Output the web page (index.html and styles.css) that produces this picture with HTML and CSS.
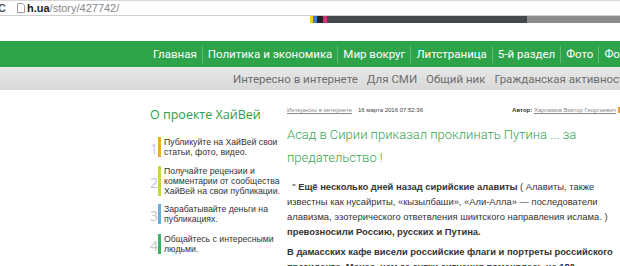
FILE: index.html
```html
<!DOCTYPE html>
<html lang="ru">
<head>
  <meta charset="UTF-8">
  <title>Асад в Сирии приказал проклинать Путина</title>
  <link rel="stylesheet" href="styles.css">
</head>
<body>
  <div class="urlbar">
    <span class="reload">C</span>
    <svg class="pageicon" width="8" height="10" viewBox="0 0 8 10"><path d="M0.5 0.5h5l2 2v7h-7z" fill="#fff" stroke="#999"/></svg>
    <span class="host">h.ua</span><span class="path">/story/427742/</span>
  </div>

  <div class="strip">
    <span class="c1"></span><span class="c2"></span><span class="c3"></span><span class="c4"></span>
    <span class="dark"></span><span class="light"></span>
  </div>

  <nav class="mainnav">
    <a href="#">Главная</a>
    <a href="#">Политика и экономика</a>
    <a href="#">Мир вокруг</a>
    <a href="#">Литстраница</a>
    <a href="#" class="active">5-й раздел</a>
    <a href="#">Фото</a>
    <a href="#">Форум</a>
  </nav>
  <nav class="subnav">
    <a href="#">Интересно в интернете</a>
    <a href="#">Для СМИ</a>
    <a href="#">Общий ник</a>
    <a href="#">Гражданская активность</a>
  </nav>

  <div class="page">
    <aside class="about">
      <h3>О проекте ХайВей</h3>
      <div class="step s1"><span class="num">1</span><p>Публикуйте на ХайВей свои статьи, фото, видео.</p></div>
      <div class="step s2"><span class="num">2</span><p>Получайте рецензии и комментарии от сообщества ХайВей на свои публикации.</p></div>
      <div class="step s3"><span class="num">3</span><p>Зарабатывайте деньги на публикациях.</p></div>
      <div class="step s4"><span class="num">4</span><p>Общайтесь с интересными людьми.</p></div>
    </aside>

    <main class="article">
      <div class="meta">
        <a href="#">Интересно в интернете</a>
        <span class="date">16 марта 2016 07:52:36</span>
        <span class="author"><b>Автор:</b> <a href="#">Харламов Виктор Георгиевич</a></span>
      </div>
      <h1>Асад в Сирии приказал проклинать Путина ... за предательство !</h1>
      <p>&nbsp;&nbsp;" <b>Ещё несколько дней назад сирийские алавиты</b> ( Алавиты, также известны как нусайриты, «кызылбаши», «Али-Алла» — последователи алавизма, эзотерического ответвления шиитского направления ислама. ) <b>превозносили Россию, русских и Путина.</b></p>
      <p><b>В дамасских кафе висели российские флаги и портреты российского президента. Менее, чем за сутки ситуация поменялась на 180 градусов.</b></p>
    </main>
  </div>
</body>
</html>
```

FILE: styles.css
```css
body { margin: 0; font-family: Roboto, sans-serif; background: #fff; overflow: hidden; }
a { text-decoration: none; }

.urlbar {
  height: 16px;
  border-top: 1px solid #d6d6d6;
  border-bottom: 1px solid #cfcfcf;
  box-sizing: border-box;
  display: flex;
  align-items: center;
  font-family: "Liberation Sans", sans-serif;
  font-size: 11px;
}
.reload { flex: none; font-weight: bold; color: #555; margin-left: -2px; margin-right: 11px; }
.pageicon { flex: none; margin-right: 2px; }
.host { color: #222; font-weight: bold; }
.path { color: #888; }

.strip { display: flex; height: 7px; margin-left: 310px; }
.strip span { display: block; }
.c1 { width: 3px; background: #e6d21a; }
.c2 { width: 4px; background: #3b7bd0; }
.c3 { width: 6px; background: #222; }
.c4 { width: 4px; background: #d0307a; }
.dark { width: 200px; background: #45494b; }
.light { flex: 1; background: #8a8c8e; }

.mainnav {
  margin-top: 18px;
  height: 26px;
  background: #2da34a;
  display: flex;
  align-items: center;
  padding-left: 153px;
  white-space: nowrap;
  overflow: hidden;
}
.mainnav a {
  color: #fff;
  font-size: 11.5px;
  padding: 0 5px;
  border-left: 1px solid #5fbb72;
  line-height: 17px;
  position: relative;
}
.mainnav a:first-child { border-left: none; padding-left: 0; }
.mainnav a.active::after {
  content: "";
  position: absolute;
  left: 50%;
  bottom: -9px;
  border: 5px solid transparent;
  border-top-color: #2da34a;
  border-bottom: none;
  margin-left: -5px;
}

.subnav {
  height: 23px;
  background: linear-gradient(#e8e8e8, #d8d8d8);
  display: flex;
  align-items: center;
  gap: 9px;
  padding-left: 233px;
  white-space: nowrap;
  overflow: hidden;
}
.subnav a { color: #6e6e6e; font-size: 11.5px; }

.page { display: flex; padding-left: 150px; }

.about { width: 137px; padding-top: 16px; flex-shrink: 0; font-family: "Open Sans", sans-serif; }
.about h3 { margin: 0 0 13px; font-weight: normal; font-size: 12.5px; color: #2e9e4a; }
.step { display: flex; align-items: center; margin-bottom: 8px; }
.num { width: 8px; color: #c8c8c8; font-size: 14px; padding-top: 3px; }
.step p {
  margin: 0;
  padding-left: 3px;
  border-left: 3px solid;
  font-family: "Liberation Sans", sans-serif;
  font-size: 8.7px;
  line-height: 10px;
  color: #333;
}
.s1 p { border-color: #e8b020; }
.s2 p { border-color: #c9d64a; }
.s3 p { border-color: #6aaed6; }
.s4 p { border-color: #3fb067; }
.s3 { margin-top: -1px; }

.article { width: 333px; flex-shrink: 0; padding-top: 17px; }
.meta {
  display: flex;
  font-family: "Liberation Sans", sans-serif;
  font-size: 6px;
  color: #444;
  white-space: nowrap;
}
.meta a { color: #888; text-decoration: underline; }
.date { margin-left: 6px; }
.author { margin-left: auto; border-right: 2px solid #e8a030; padding-right: 2px; }
.author b { color: #333; }

.article h1 {
  margin: 10px 0 10px;
  font-weight: 300;
  font-size: 13px;
  line-height: 23px;
  color: #36a553;
}
.article p {
  margin: 0 0 5px;
  font-family: "Liberation Sans", sans-serif;
  font-size: 9.4px;
  line-height: 15px;
  color: #333;
}
```
